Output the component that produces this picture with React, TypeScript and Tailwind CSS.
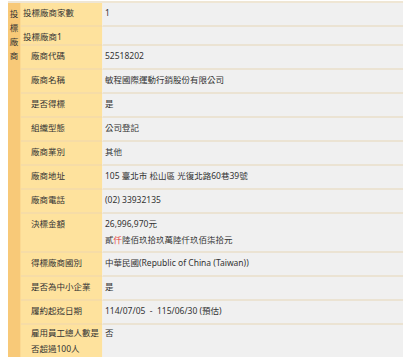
import React from "react";

type Row = {
  label: React.ReactNode;
  value?: React.ReactNode;
  indent?: boolean;
  h: string;
  last?: boolean;
};

const rows: Row[] = [
  { label: "投標廠商家數", value: "1", h: "h-[24px]" },
  { label: "投標廠商1", value: "", h: "h-[19px]" },
  { label: "廠商代碼", value: "52518202", indent: true, h: "h-[24px]" },
  { label: "廠商名稱", value: "敏程國際運動行銷股份有限公司", indent: true, h: "h-[24px]" },
  { label: "是否得標", value: "是", indent: true, h: "h-[24px]" },
  { label: "組織型態", value: "公司登記", indent: true, h: "h-[24px]" },
  { label: "廠商業別", value: "其他", indent: true, h: "h-[24px]" },
  { label: "廠商地址", value: "105 臺北市 松山區 光復北路60巷39號", indent: true, h: "h-[24px]" },
  { label: "廠商電話", value: "(02) 33932135", indent: true, h: "h-[24px]" },
  {
    label: "決標金額",
    value: (
      <>
        <div>26,996,970元</div>
        <div>
          貳<span className="text-[#e23a3a]">仟</span>陸佰玖拾玖萬陸仟玖佰柒拾元
        </div>
      </>
    ),
    indent: true,
    h: "h-[39px]",
  },
  { label: "得標廠商國別", value: "中華民國(Republic of China (Taiwan))", indent: true, h: "h-[24px]" },
  { label: "是否為中小企業", value: "是", indent: true, h: "h-[24px]" },
  { label: "履約起迄日期", value: "114/07/05\u00a0 - \u00a0115/06/30 (預估)", indent: true, h: "h-[24px]" },
  {
    label: (
      <>
        <div>雇用員工總人數是</div>
        <div>否超過100人</div>
      </>
    ),
    value: "否",
    indent: true,
    h: "h-[32px]",
    last: true,
  },
];

export default function App() {
  return (
    <div
      className="w-[403px] h-[360px] bg-white overflow-hidden text-[#333333] text-[8.5px] leading-[16px]"
      style={{ fontFamily: '"Noto Sans", "Noto Sans CJK TC", sans-serif' }}
    >
      <div className="ml-[8px] mt-[1px] flex border-t-2 border-[#efe6d4]">
        <div className="w-[13px] shrink-0 bg-[#f8c978] border-r border-[#fbd993] flex flex-col items-center pt-[4px] leading-[14px]">
          <span>投</span>
          <span>標</span>
          <span>廠</span>
          <span>商</span>
        </div>
        <div className="flex-1 flex flex-col">
          {rows.map((r, i) => (
            <div key={i} className="flex">
              <div
                className={`w-[81px] shrink-0 bg-[#fee29d] ${r.h} ${
                  r.last ? "pt-0" : "border-b-2 border-[#f6dca6] pt-[2px]"
                } ${r.indent ? "pl-[10px]" : "pl-[2px]"}`}
              >
                {r.label}
              </div>
              <div
                className={`flex-1 bg-[#f0f0f0] border-l border-[#f4efe6] ${r.h} ${
                  r.last ? "pt-0" : "border-b-2 border-b-[#ebe3d3] pt-[2px]"
                } pl-[2px] whitespace-nowrap`}
              >
                {r.value}
              </div>
            </div>
          ))}
        </div>
      </div>
    </div>
  );
}
